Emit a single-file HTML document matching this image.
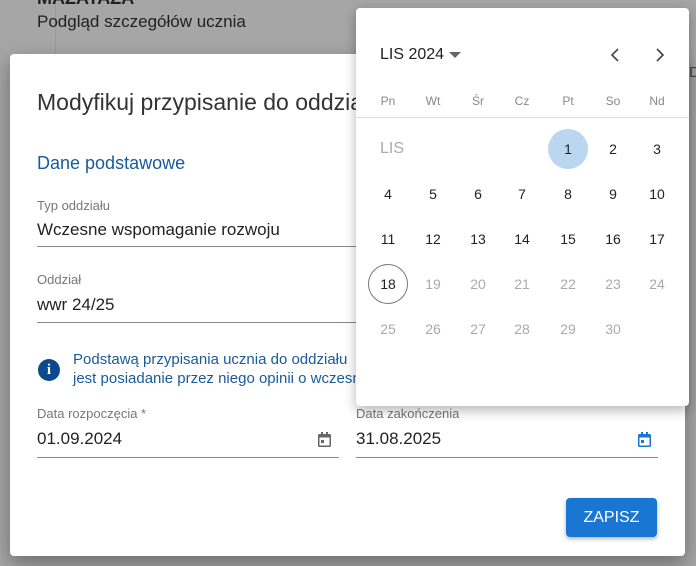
<!DOCTYPE html>
<html><head><meta charset="utf-8"><style>
*{box-sizing:border-box;margin:0;padding:0}
body{width:696px;height:566px;overflow:hidden;background:#a6a6a6;font-family:"Liberation Sans",sans-serif;position:relative}
.abs{position:absolute}
.dlg{left:10px;top:54px;width:675px;height:502px;background:#fff;border-radius:4px;box-shadow:0 8px 20px rgba(0,0,0,.35)}
.lbl{font-size:13px;color:#777}
.val{font-size:17px;color:#222}
.line{height:1px;background:#888}
.pop{left:356px;top:8px;width:333px;height:398px;background:#fff;border-radius:4px;box-shadow:0 4px 12px rgba(0,0,0,.3)}
.d{position:absolute;width:40px;height:40px;line-height:40px;text-align:center;font-size:14px;color:#222;margin-left:-20px;margin-top:-20px}
.g{color:#aaa}
.h{position:absolute;font-size:12px;color:#888;width:40px;text-align:center;margin-left:-20px}
</style></head><body>
<div class="abs" style="left:55px;top:0;width:1px;height:54px;background:#999"></div>
<div class="abs" style="left:37px;top:-12px;font-size:18px;color:#222;font-weight:bold">MAZATAZA</div>
<div class="abs" style="left:37px;top:12px;font-size:17px;color:#222">Podgląd szczegółów ucznia</div>
<div class="abs" style="left:689px;top:64px;font-size:15px;color:#444">D</div>
<div class="abs dlg"></div>
<div class="abs" style="left:37px;top:89px;font-size:23px;color:#333">Modyfikuj przypisanie do oddziału</div>
<div class="abs" style="left:37px;top:153px;font-size:18px;color:#1a5a9a">Dane podstawowe</div>
<div class="abs lbl" style="left:37px;top:198px">Typ oddziału</div>
<div class="abs val" style="left:37px;top:220px">Wczesne wspomaganie rozwoju</div>
<div class="abs line" style="left:37px;top:246px;width:620px"></div>
<div class="abs lbl" style="left:37px;top:272px">Oddział</div>
<div class="abs val" style="left:37px;top:295px">wwr 24/25</div>
<div class="abs line" style="left:37px;top:322px;width:620px"></div>
<div class="abs" style="left:38px;top:359px;width:22px;height:22px;border-radius:50%;background:#0d4a8c;color:#fff;font-weight:bold;font-size:15px;text-align:center;line-height:22px;font-family:'Liberation Serif',serif">i</div>
<div class="abs" style="left:73px;top:350px;font-size:15px;color:#1a5a9a;line-height:19px;white-space:nowrap">Podstawą przypisania ucznia do oddziału<br>jest posiadanie przez niego opinii o wczesnym</div>
<div class="abs lbl" style="left:37px;top:406px">Data rozpoczęcia *</div>
<div class="abs val" style="left:37px;top:429px">01.09.2024</div>
<svg class="abs" style="left:317px;top:432px" width="15" height="16" viewBox="0 0 15 16"><rect x="1" y="2" width="13" height="13" rx="1.5" fill="#666"/><rect x="2.5" y="5.5" width="10" height="8" fill="#fff"/><rect x="4" y="0" width="2" height="3" fill="#666"/><rect x="9" y="0" width="2" height="3" fill="#666"/><rect x="4" y="8" width="3" height="3" fill="#666"/></svg>
<div class="abs line" style="left:37px;top:457px;width:302px"></div>
<div class="abs lbl" style="left:356px;top:406px">Data zakończenia</div>
<div class="abs val" style="left:356px;top:429px">31.08.2025</div>
<svg class="abs" style="left:637px;top:432px" width="15" height="16" viewBox="0 0 15 16"><rect x="1" y="2" width="13" height="13" rx="1.5" fill="#1976d2"/><rect x="2.5" y="5.5" width="10" height="8" fill="#fff"/><rect x="4" y="0" width="2" height="3" fill="#1976d2"/><rect x="9" y="0" width="2" height="3" fill="#1976d2"/><rect x="4" y="8" width="3" height="3" fill="#1976d2"/></svg>
<div class="abs line" style="left:356px;top:457px;width:302px"></div>
<div class="abs" style="left:566px;top:498px;width:91px;height:39px;background:#1976d2;border-radius:4px;color:#fff;font-size:16px;text-align:center;line-height:39px;box-shadow:0 2px 4px rgba(0,0,0,.3)">ZAPISZ</div>

<div class="abs pop"></div>
<div class="abs" style="left:380px;top:46px;font-size:16px;color:#222">LIS 2024</div>
<svg class="abs" style="left:449px;top:52px" width="12" height="6"><path d="M0 0L12 0L6 6Z" fill="#666"/></svg>
<svg class="abs" style="left:609px;top:47px" width="12" height="16"><path d="M9 2L3 8L9 14" stroke="#444" stroke-width="1.6" fill="none"/></svg>
<svg class="abs" style="left:654px;top:47px" width="12" height="16"><path d="M3 2L9 8L3 14" stroke="#444" stroke-width="1.6" fill="none"/></svg>
<div class="h" style="left:388px;top:94px">Pn</div><div class="h" style="left:433px;top:94px">Wt</div><div class="h" style="left:478px;top:94px">Śr</div><div class="h" style="left:522px;top:94px">Cz</div><div class="h" style="left:568px;top:94px">Pt</div><div class="h" style="left:613px;top:94px">So</div><div class="h" style="left:657px;top:94px">Nd</div>
<div class="abs" style="left:356px;top:117px;width:333px;height:1px;background:#ddd"></div>
<div class="d g" style="left:392px;top:149px;font-size:16px">LIS</div>
<div class="d" style="left:568px;top:149px;background:#bbd6f1;border-radius:50%">1</div>
<div class="d" style="left:613px;top:149px">2</div><div class="d" style="left:657px;top:149px">3</div>
<div class="d" style="left:388px;top:194px">4</div><div class="d" style="left:433px;top:194px">5</div><div class="d" style="left:478px;top:194px">6</div><div class="d" style="left:522px;top:194px">7</div><div class="d" style="left:568px;top:194px">8</div><div class="d" style="left:613px;top:194px">9</div><div class="d" style="left:657px;top:194px">10</div>
<div class="d" style="left:388px;top:239px">11</div><div class="d" style="left:433px;top:239px">12</div><div class="d" style="left:478px;top:239px">13</div><div class="d" style="left:522px;top:239px">14</div><div class="d" style="left:568px;top:239px">15</div><div class="d" style="left:613px;top:239px">16</div><div class="d" style="left:657px;top:239px">17</div>
<div class="d" style="left:388px;top:284px;border:1px solid #777;border-radius:50%;line-height:38px">18</div><div class="d g" style="left:433px;top:284px">19</div><div class="d g" style="left:478px;top:284px">20</div><div class="d g" style="left:522px;top:284px">21</div><div class="d g" style="left:568px;top:284px">22</div><div class="d g" style="left:613px;top:284px">23</div><div class="d g" style="left:657px;top:284px">24</div>
<div class="d g" style="left:388px;top:329px">25</div><div class="d g" style="left:433px;top:329px">26</div><div class="d g" style="left:478px;top:329px">27</div><div class="d g" style="left:522px;top:329px">28</div><div class="d g" style="left:568px;top:329px">29</div><div class="d g" style="left:613px;top:329px">30</div>
</body></html>
